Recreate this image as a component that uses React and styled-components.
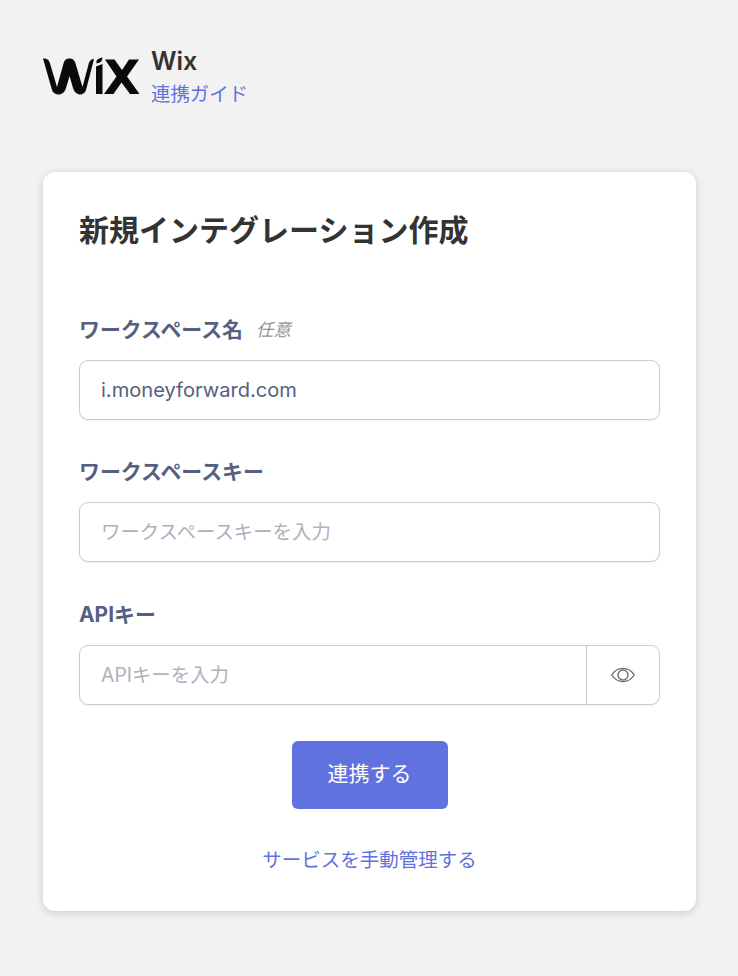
import React from "react";
import styled, { createGlobalStyle } from "styled-components";

const GlobalStyle = createGlobalStyle`
  html, body {
    margin: 0;
    padding: 0;
    background: #f2f2f2;
    font-family: Inter, "Noto Sans CJK JP", sans-serif;
  }
  * {
    box-sizing: border-box;
  }
`;

const Page = styled.div`
  width: 738px;
  height: 976px;
  padding: 45px 42px 0 43px;
  overflow: hidden;
`;

const Header = styled.header`
  display: flex;
  align-items: flex-start;
  gap: 12px;
  height: 127px;
`;

const Logo = styled.svg`
  width: 96px;
  height: 38px;
  margin-top: 12px;
  flex: none;
`;

const HeaderText = styled.div`
  display: flex;
  flex-direction: column;
`;

const ServiceName = styled.div`
  font-size: 25px;
  line-height: 32px;
  font-weight: 600;
  color: #333333;
`;

const GuideLink = styled.a`
  margin-top: 3px;
  font-size: 19.4px;
  line-height: 28px;
  color: #6072dd;
  text-decoration: none;
`;

const Card = styled.main`
  background: #ffffff;
  border-radius: 12px;
  box-shadow: 0 2px 8px rgba(0, 0, 0, 0.16);
  height: 739px;
  padding: 36px;
  display: flex;
  flex-direction: column;
`;

const Title = styled.h1`
  margin: 0 0 61px;
  font-size: 30px;
  line-height: 44px;
  font-weight: 700;
  color: #333333;
`;

const Field = styled.div`
  margin-bottom: 35.4px;
`;

const LabelRow = styled.div`
  display: flex;
  align-items: center;
  gap: 13px;
  height: 30px;
  margin-bottom: 17px;
`;

const Label = styled.label`
  font-size: 20.9px;
  font-weight: 700;
  color: #555f82;
`;

const Optional = styled.span`
  font-size: 17.4px;
  font-style: italic;
  color: #949494;
`;

const InputGroup = styled.div`
  display: flex;
  height: 60px;
  background: #ffffff;
  border: 1px solid #cccccc;
  border-radius: 9px;
  box-shadow: 0 1px 2px rgba(0, 0, 0, 0.06);
  overflow: hidden;
`;

const Input = styled.input`
  flex: 1;
  min-width: 0;
  border: none;
  outline: none;
  padding: 0 21px;
  background: transparent;
  font-family: inherit;
  font-size: 20.1px;
  color: #555f82;
  &::placeholder {
    color: #aeb1bf;
    opacity: 1;
    font-size: 19.4px;
  }
`;

const EyeButton = styled.button`
  width: 73px;
  flex: none;
  display: flex;
  align-items: center;
  justify-content: center;
  padding: 0;
  border: none;
  border-left: 1px solid #cccccc;
  background: transparent;
`;

const Actions = styled.div`
  display: flex;
  flex-direction: column;
  align-items: center;
  margin-top: 0.8px;
`;

const Submit = styled.button`
  width: 156px;
  height: 68px;
  padding: 0 0 5px;
  border: none;
  border-radius: 6px;
  background: #6072dd;
  color: #ffffff;
  font-family: inherit;
  font-size: 21px;
  font-weight: 400;
`;

const ManualLink = styled.a`
  margin-top: 36px;
  font-size: 19.5px;
  line-height: 30px;
  color: #6072dd;
  text-decoration: none;
`;

const WixLogo = () => (
  <Logo viewBox="0 0 96 38" aria-label="Wix">
    <path
      d="M0 1.5 C4 1.5 6 2.5 7 6.5 L14 30 L20.5 6.5 C21.5 2.5 24 1.5 26.5 1.5 C29 1.5 31.5 2.5 32.5 6.5 L39.5 30 L45.5 7.5 C46.5 3.5 48.5 2 51 2 L43 33 C42 36.5 38.5 38 35.5 37.2 C32.5 36.5 31 34 30 31 L26.6 19 L23 31 C22 34 20.5 36.5 17.5 37.2 C14 38 10 36.5 9 33 Z"
      fill="#0a0a0a"
    />
    <path d="M53 9.5 L59.5 7 L59.5 37 L53 37 Z" fill="#0a0a0a" />
    <path d="M53.5 3.5 C55.5 1.5 58 0.5 59.5 0.5 C59.5 4 57.5 6 53.5 6.5 Z" fill="#0a0a0a" />
    <path
      d="M62 2.5 L71.5 2.5 L79 13 L86 2.5 L96 2.5 L84 19.5 L96.5 37 L87 37 L78.5 25.5 L70.5 37 L61 37 L73.5 19.5 Z"
      fill="#0a0a0a"
    />
  </Logo>
);

const EyeIcon = () => (
  <svg width="24" height="24" viewBox="0 0 24 24" fill="none" stroke="#707070" strokeWidth="1.4">
    <path d="M0.8 12 C3.5 7.6 7.4 5.4 12 5.4 C16.6 5.4 20.5 7.6 23.2 12 C20.5 16.4 16.6 18.6 12 18.6 C7.4 18.6 3.5 16.4 0.8 12 Z" />
    <circle cx="12" cy="12" r="5" />
  </svg>
);

export default function App() {
  return (
    <>
      <GlobalStyle />
      <Page>
        <Header>
          <WixLogo />
          <HeaderText>
            <ServiceName>Wix</ServiceName>
            <GuideLink href="#">連携ガイド</GuideLink>
          </HeaderText>
        </Header>
        <Card>
          <Title>新規インテグレーション作成</Title>
          <Field>
            <LabelRow>
              <Label>ワークスペース名</Label>
              <Optional>任意</Optional>
            </LabelRow>
            <InputGroup>
              <Input defaultValue="i.moneyforward.com" />
            </InputGroup>
          </Field>
          <Field>
            <LabelRow>
              <Label>ワークスペースキー</Label>
            </LabelRow>
            <InputGroup>
              <Input placeholder="ワークスペースキーを入力" />
            </InputGroup>
          </Field>
          <Field>
            <LabelRow>
              <Label>APIキー</Label>
            </LabelRow>
            <InputGroup>
              <Input placeholder="APIキーを入力" />
              <EyeButton aria-label="表示">
                <EyeIcon />
              </EyeButton>
            </InputGroup>
          </Field>
          <Actions>
            <Submit>連携する</Submit>
            <ManualLink href="#">サービスを手動管理する</ManualLink>
          </Actions>
        </Card>
      </Page>
    </>
  );
}
